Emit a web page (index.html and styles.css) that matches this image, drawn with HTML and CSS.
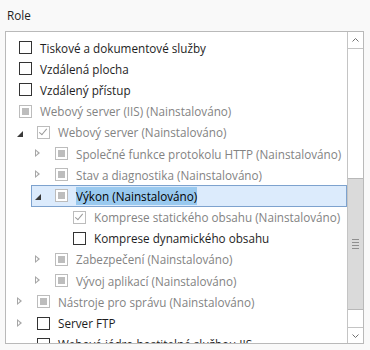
FILE: index.html
```html
<!DOCTYPE html>
<html lang="cs">
<head>
    <meta charset="UTF-8">
    <title>Role</title>
    <link rel="stylesheet" href="styles.css">
</head>
<body>
    <div class="panel">
        <div class="panel-title">Role</div>

        <div class="tree-box">
            <div class="tree">
                <div class="row lvl-0">
                    <div class="item">
                        <span class="chk"></span>
                        <span class="label">Tiskové a dokumentové služby</span>
                    </div>
                </div>
                <div class="row lvl-0">
                    <div class="item">
                        <span class="chk"></span>
                        <span class="label">Vzdálená plocha</span>
                    </div>
                </div>
                <div class="row lvl-0">
                    <div class="item">
                        <span class="chk"></span>
                        <span class="label">Vzdálený přístup</span>
                    </div>
                </div>
                <div class="row lvl-0">
                    <div class="item off">
                        <span class="chk part"></span>
                        <span class="label">Webový server (IIS) (Nainstalováno)</span>
                    </div>
                </div>

                <!-- Webový server -->
                <div class="row lvl-1">
                    <div class="item off">
                        <span class="exp open"></span>
                        <span class="chk done"></span>
                        <span class="label">Webový server (Nainstalováno)</span>
                    </div>
                </div>
                <div class="row lvl-2">
                    <div class="item off">
                        <span class="exp shut"></span>
                        <span class="chk part"></span>
                        <span class="label">Společné funkce protokolu HTTP (Nainstalováno)</span>
                    </div>
                </div>
                <div class="row lvl-2">
                    <div class="item off">
                        <span class="exp shut"></span>
                        <span class="chk part"></span>
                        <span class="label">Stav a diagnostika (Nainstalováno)</span>
                    </div>
                </div>
                <div class="row lvl-2">
                    <div class="item selected">
                        <span class="exp open"></span>
                        <span class="chk part"></span>
                        <span class="label">Výkon (Nainstalováno)</span>
                    </div>
                </div>
                <div class="row lvl-3">
                    <div class="item off">
                        <span class="exp"></span>
                        <span class="chk done"></span>
                        <span class="label">Komprese statického obsahu (Nainstalováno)</span>
                    </div>
                </div>
                <div class="row lvl-3">
                    <div class="item">
                        <span class="exp"></span>
                        <span class="chk"></span>
                        <span class="label">Komprese dynamického obsahu</span>
                    </div>
                </div>
                <div class="row lvl-2">
                    <div class="item off">
                        <span class="exp shut"></span>
                        <span class="chk part"></span>
                        <span class="label">Zabezpečení (Nainstalováno)</span>
                    </div>
                </div>
                <div class="row lvl-2">
                    <div class="item off">
                        <span class="exp shut"></span>
                        <span class="chk part"></span>
                        <span class="label">Vývoj aplikací (Nainstalováno)</span>
                    </div>
                </div>

                <div class="row lvl-1">
                    <div class="item off">
                        <span class="exp shut"></span>
                        <span class="chk part"></span>
                        <span class="label">Nástroje pro správu (Nainstalováno)</span>
                    </div>
                </div>
                <div class="row lvl-1">
                    <div class="item">
                        <span class="exp shut"></span>
                        <span class="chk"></span>
                        <span class="label">Server FTP</span>
                    </div>
                </div>
                <div class="row lvl-1">
                    <div class="item">
                        <span class="exp"></span>
                        <span class="chk"></span>
                        <span class="label">Webové jádro hostitelné službou IIS</span>
                    </div>
                </div>
            </div>

            <div class="scrollbar">
                <div class="sb-btn">
                    <svg width="7" height="4" viewBox="0 0 7 4"><path d="M0.5 3.5 L3.5 0.5 L6.5 3.5" fill="none" stroke="#707070" stroke-width="1"/></svg>
                </div>
                <div class="sb-track">
                    <div class="sb-thumb">
                        <span class="grip"></span>
                    </div>
                </div>
                <div class="sb-btn bottom">
                    <svg width="7" height="4" viewBox="0 0 7 4"><path d="M0.5 0.5 L3.5 3.5 L6.5 0.5" fill="none" stroke="#707070" stroke-width="1"/></svg>
                </div>
            </div>
        </div>
    </div>
</body>
</html>
```

FILE: styles.css
```css
body {
    margin: 0;
    background-color: #f9f9f9;
    font-family: "Open Sans", "Noto Sans", sans-serif;
    font-size: 11.7px;
    color: #1e1e1e;
}

.panel {
    width: 370px;
    height: 350px;
}

.panel-title {
    height: 31px;
    padding: 7px 0 0 7px;
    box-sizing: border-box;
    line-height: 16px;
}

.tree-box {
    display: flex;
    width: 359px;
    height: 313px;
    margin-left: 5px;
    box-sizing: border-box;
    border: 1px solid #b9b9b9;
    background-color: #fff;
}

.tree {
    flex: 1;
    padding-top: 5px;
    overflow: hidden;
}

/* one line of the tree */
.row {
    display: flex;
    height: 21.2px;
}

.lvl-0 { padding-left: 13px; }
.lvl-1 { padding-left: 7px; }
.lvl-2 { padding-left: 25px; }
.lvl-3 { padding-left: 43px; }

.item {
    flex: 1;
    display: flex;
    align-items: center;
    white-space: nowrap;
}

.item.off {
    color: #838383;
}

.item.selected {
    background-color: #dcebfc;
    box-shadow: inset 0 0 0 1px #7da2ce;
}

.item.selected .label {
    background-color: #99c9ef;
    color: #000;
    line-height: 18px;
}

.label {
    margin-left: 8px;
    line-height: 16px;
}

/* expander triangles */
.exp {
    width: 13px;
    height: 13px;
    margin-right: 11px;
    position: relative;
    flex: none;
}

.exp.shut::before {
    content: "";
    position: absolute;
    left: 4px;
    top: 2px;
    width: 0;
    height: 0;
    border-top: 4.5px solid transparent;
    border-bottom: 4.5px solid transparent;
    border-left: 5px solid #a6a6a6;
}

.exp.shut::after {
    content: "";
    position: absolute;
    left: 5px;
    top: 4px;
    width: 0;
    height: 0;
    border-top: 2.5px solid transparent;
    border-bottom: 2.5px solid transparent;
    border-left: 2.8px solid #fff;
}

.exp.open::before {
    content: "";
    position: absolute;
    left: 4px;
    top: 5px;
    width: 0;
    height: 0;
    border-left: 6px solid transparent;
    border-bottom: 6px solid #3a3a3a;
}

/* checkboxes */
.chk {
    width: 13px;
    height: 13px;
    box-sizing: border-box;
    border: 1px solid #333;
    background-color: #fff;
    position: relative;
    flex: none;
}

.chk.part,
.chk.done {
    border-color: #bcbcbc;
}

.chk.part::after {
    content: "";
    position: absolute;
    left: 2px;
    top: 2px;
    width: 7px;
    height: 7px;
    background-color: #bdbdbd;
}

.chk.done::after {
    content: "";
    position: absolute;
    left: 3px;
    top: 0px;
    width: 3px;
    height: 7px;
    border-right: 1.5px solid #9a9a9a;
    border-bottom: 1.5px solid #9a9a9a;
    transform: rotate(40deg);
}

/* scrollbar */
.scrollbar {
    width: 16px;
    display: flex;
    flex-direction: column;
    border-left: 1px solid #c4c4c4;
    box-sizing: border-box;
}

.sb-btn {
    height: 17px;
    border-bottom: 1px solid #c4c4c4;
    box-sizing: border-box;
    display: flex;
    align-items: center;
    justify-content: center;
}

.sb-btn.bottom {
    border-bottom: none;
    border-top: 1px solid #c4c4c4;
    height: 16px;
}

.sb-track {
    flex: 1;
}

.sb-thumb {
    margin-top: 129px;
    height: 132px;
    background-color: #dadada;
    border-top: 1px solid #b8b8b8;
    border-bottom: 1px solid #b8b8b8;
    box-sizing: border-box;
    display: flex;
    align-items: center;
    justify-content: center;
}

.grip {
    width: 7px;
    height: 10px;
    background: repeating-linear-gradient(#8f8f8f 0 1px, transparent 1px 3px);
}
```
